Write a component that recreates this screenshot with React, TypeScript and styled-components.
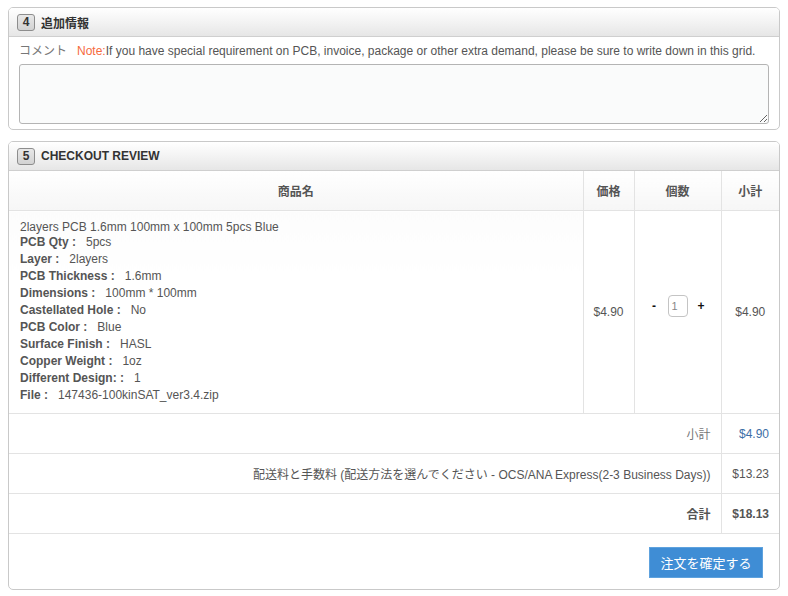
import React from "react";
import styled, { createGlobalStyle } from "styled-components";

const Global = createGlobalStyle`
  html, body { margin: 0; padding: 0; background: #fff; }
  body {
    font-family: "Liberation Sans", Arial, "Noto Sans CJK JP", sans-serif;
    font-size: 12px;
    color: #555;
  }
`;

const Page = styled.div`
  width: 772px;
  padding: 7px 0 0 8px;
  display: flex;
  flex-direction: column;
  gap: 11px;
`;

const Panel = styled.section`
  border: 1px solid #c9c9c9;
  border-radius: 5px;
  background: #fff;
  overflow: hidden;
`;

const PanelHeader = styled.div`
  height: 28px;
  display: flex;
  align-items: center;
  padding-left: 8px;
  border-bottom: 1px solid #cfcfcf;
  background: linear-gradient(to bottom, #ffffff 0%, #f3f3f3 50%, #e6e6e6 100%);
`;

const Badge = styled.span`
  box-sizing: border-box;
  width: 18px;
  height: 17px;
  display: inline-flex;
  align-items: center;
  justify-content: center;
  border: 1px solid #8d8d8d;
  border-radius: 3px;
  background: linear-gradient(to bottom, #e8e8e8, #d2d2d2);
  font-weight: bold;
  font-size: 12px;
  color: #333;
`;

const Title = styled.span`
  margin-left: 6px;
  font-weight: bold;
  font-size: 12px;
  color: #333;
`;

const CommentBody = styled.div`
  padding: 5px 10px 5px;
  display: flex;
  flex-direction: column;
  gap: 4px;
`;

const CommentLine = styled.div`
  line-height: 18px;
  color: #555;
  white-space: nowrap;
`;

const CommentLabel = styled.span`
  color: #777;
  margin-right: 10px;
`;

const Note = styled.span`
  color: #f66a3e;
`;

const TextArea = styled.textarea`
  box-sizing: border-box;
  width: 750px;
  height: 60px;
  border: 1px solid #b4b4b4;
  border-radius: 3px;
  background: #fafbfb;
  margin: 0;
  display: block;
  resize: vertical;
`;

const Table = styled.table`
  width: 770px;
  border-collapse: collapse;
  table-layout: fixed;
`;

const HeadCell = styled.th`
  height: 39px;
  padding: 0;
  font-weight: bold;
  font-size: 12px;
  color: #555;
  text-align: center;
  background: linear-gradient(to bottom, #ffffff, #f6f6f6);
  border-bottom: 1px solid #e3e3e3;
  border-right: 1px solid #e3e3e3;
  &:last-child { border-right: none; }
`;

const Cell = styled.td<{ $align?: string; $bold?: boolean; $color?: string }>`
  padding: 0 10px;
  height: 39px;
  text-align: ${(p) => p.$align || "left"};
  font-weight: ${(p) => (p.$bold ? "bold" : "normal")};
  color: ${(p) => p.$color || "#555"};
  border-bottom: 1px solid #e3e3e3;
  border-right: 1px solid #e3e3e3;
  vertical-align: middle;
  white-space: nowrap;
  &:last-child { border-right: none; }
`;

const ProductCell = styled.td`
  padding: 9px 10px 9px 11px;
  border-bottom: 1px solid #e3e3e3;
  border-right: 1px solid #e3e3e3;
  vertical-align: top;
  background: linear-gradient(to bottom, #fcfcfc, #ffffff 30%);
`;

const ProductName = styled.div`
  line-height: 14px;
  color: #555;
`;

const SpecRow = styled.div`
  line-height: 17px;
  color: #555;
`;

const SpecKey = styled.b`
  color: #555;
  margin-right: 10px;
`;

const QtyBox = styled.div`
  display: flex;
  align-items: center;
  justify-content: center;
  padding-bottom: 12px;
`;

const QtyBtn = styled.span`
  color: #111;
  font-size: 12px;
  font-weight: bold;
  width: 20px;
  text-align: center;
`;

const QtyInput = styled.input`
  box-sizing: border-box;
  width: 20px;
  height: 22px;
  margin: 0 4px;
  padding: 0 0 0 3px;
  border: 1px solid #c4c4c4;
  border-radius: 4px;
  font-family: "Liberation Sans", Arial, sans-serif;
  font-size: 11px;
  color: #888;
`;

const ButtonRow = styled.div`
  display: flex;
  justify-content: flex-end;
  padding: 13px 16px 11px 0;
`;

const Confirm = styled.button`
  width: 114px;
  height: 31px;
  border: 1px solid #5ea2de;
  background: #3f8dd5;
  color: #fff;
  font-family: "Liberation Sans", Arial, "Noto Sans CJK JP", sans-serif;
  font-size: 13px;
  cursor: pointer;
  padding: 0;
`;

const specs: [string, string][] = [
  ["PCB Qty :", "5pcs"],
  ["Layer :", "2layers"],
  ["PCB Thickness :", "1.6mm"],
  ["Dimensions :", "100mm * 100mm"],
  ["Castellated Hole :", "No"],
  ["PCB Color :", "Blue"],
  ["Surface Finish :", "HASL"],
  ["Copper Weight :", "1oz"],
  ["Different Design: :", "1"],
  ["File :", "147436-100kinSAT_ver3.4.zip"],
];

export default function App() {
  return (
    <>
      <Global />
      <Page>
        <Panel>
          <PanelHeader>
            <Badge>4</Badge>
            <Title>追加情報</Title>
          </PanelHeader>
          <CommentBody>
            <CommentLine>
              <CommentLabel>コメント</CommentLabel>
              <Note>Note:</Note>If you have special requirement on PCB, invoice, package or other extra demand, please be sure to write down in this grid.
            </CommentLine>
            <TextArea />
          </CommentBody>
        </Panel>
        <Panel>
          <PanelHeader>
            <Badge>5</Badge>
            <Title>CHECKOUT REVIEW</Title>
          </PanelHeader>
          <Table>
            <colgroup>
              <col style={{ width: 574 }} />
              <col style={{ width: 51 }} />
              <col style={{ width: 87 }} />
              <col style={{ width: 58 }} />
            </colgroup>
            <thead>
              <tr>
                <HeadCell>商品名</HeadCell>
                <HeadCell>価格</HeadCell>
                <HeadCell>個数</HeadCell>
                <HeadCell>小計</HeadCell>
              </tr>
            </thead>
            <tbody>
              <tr>
                <ProductCell>
                  <ProductName>2layers PCB 1.6mm 100mm x 100mm 5pcs Blue</ProductName>
                  {specs.map(([k, v]) => (
                    <SpecRow key={k}>
                      <SpecKey>{k}</SpecKey>
                      {v}
                    </SpecRow>
                  ))}
                </ProductCell>
                <Cell $align="center">$4.90</Cell>
                <Cell $align="center">
                  <QtyBox>
                    <QtyBtn>-</QtyBtn>
                    <QtyInput defaultValue="1" />
                    <QtyBtn>+</QtyBtn>
                  </QtyBox>
                </Cell>
                <Cell $align="center">$4.90</Cell>
              </tr>
              <tr>
                <Cell colSpan={3} $align="right" $color="#777">小計</Cell>
                <Cell $align="right" $color="#3c6ea6">$4.90</Cell>
              </tr>
              <tr>
                <Cell colSpan={3} $align="right">配送料と手数料 (配送方法を選んでください - OCS/ANA Express(2-3 Business Days))</Cell>
                <Cell $align="right">$13.23</Cell>
              </tr>
              <tr>
                <Cell colSpan={3} $align="right" $bold>合計</Cell>
                <Cell $align="right" $bold>$18.13</Cell>
              </tr>
            </tbody>
          </Table>
          <ButtonRow>
            <Confirm>注文を確定する</Confirm>
          </ButtonRow>
        </Panel>
      </Page>
    </>
  );
}
